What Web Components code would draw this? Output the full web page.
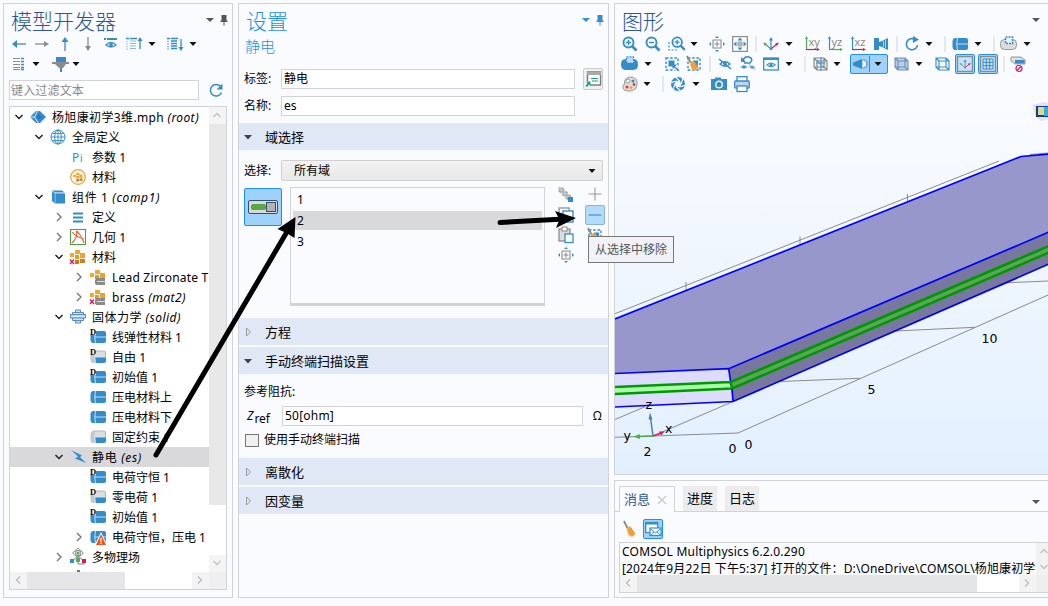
<!DOCTYPE html>
<html lang="zh-CN"><head><meta charset="utf-8"><title>COMSOL Multiphysics</title>
<style>
html,body{margin:0;width:1048px;height:606px;overflow:hidden;background:#fafbff}
body{font:12px/20px "Noto Sans","Noto Sans CJK SC",sans-serif;color:#000}
</style></head><body><app-shell></app-shell>
<script>
const B='#358ccb',G='#8c8c8c',O='#f0a030';
const L=(d,c=B,w=1.3,x='')=>`<path d="${d}" fill="none" stroke="${c}" stroke-width="${w}" ${x}/>`;
const F=(d,c=B)=>`<path d="${d}" fill="${c}"/>`;
const R=(x,y,w,h,f=B,s='none',k=1)=>`<rect x="${x}" y="${y}" width="${w}" height="${h}" fill="${f}" stroke="${s}" stroke-width="${k}"/>`;
const broom=L('M1 0L5 7','#888',2)+F('M4 7L8 5L14 13L10 16L6 14Z','#f5a742')+L('M6 9L11 14M8 7L12 12','#d9822b',.8);
const eye=L('M3 8Q8 3.500 13 8Q8 12.500 3 8Z',B,1.3)+`<circle cx="8" cy="8" r="1.900" fill="${B}"/>`;
const cyl=(top=B,d=false)=>F('M5 2H14Q16 2 16 4V8H5Z',top)+F('M5 8H16V12Q16 14 14 14H5Z')+`<path d="M3 2H5.500Q4 8 5.500 14H3Q0 14 .5 8Q0 2 3 2Z" fill="${top==B?B:'#c4c8cc'}"/>`+L('M5.500 2Q4 8 5.500 14M5 8H16','#cfe6f6',.9)+(top!=B?L('M3 2H14Q15.500 2 15.500 4V8','#aaa',.8):'')+(d?R(0,-1,6,7,'#fff')+`<text x="0" y="5.500" font-family="Liberation Serif" font-weight="bold" font-size="8.500">D</text>`:'');
const mat=(s='')=>R(0,4,4,4,'#f5a928')+R(5,1,5,4,'#f5a928')+R(5,6,4,4,'#e69a22')+R(10,4,5,5,'#f0a030')+R(5,11,4,4,'#c87820')+R(10,10,5,4,'#d08020')+s;
const db=F('M6 9H15V16H6Q4 12.500 6 9','#8a8a8a')+L('M7 12.500H15','#ddd',1);
const red=R(-.5,9,5,6.500,'#fff')+L('M0 10.500L4 15M4 10.500L0 15','#d81b60',1.4);
const cube=(c,f)=>F('M2 2H11L15 5V14H5L2 11Z',f)+L('M2 2H12V11H2ZM5 5H15V14H5ZM2 2L5 5M12 2L15 5M2 11L5 14M12 11L15 14',c,1.1);
const plane=(t,h,v)=>L('M2.500 2V14',v,1.2)+L('M2 13.500H14',h,1.2)+F('M2.500 0L1 3H4Z',v)+F('M16 13.500L13 12V15Z',h)+`<text x="4.500" y="10" font-size="11" font-family="Noto Sans" fill="#8a8a8a">${t}</text>`;
const lens=(s)=>`<circle cx="6.500" cy="6.500" r="5" fill="none" stroke="${B}" stroke-width="1.900"/>`+L('M10 10L14.500 14.500',B,2.600)+L(s,B,1.400);
const ext=L('M4 4H12V12H4ZM8 5.500V10.500M5.500 8H10.500',G,1.100)+F('M8 0L10 2H6ZM8 16L10 14H6ZM0 8L2 6V10ZM16 8L14 6V10Z');
const dsel=L('M2 2H14V14H2Z',B,1.400,'stroke-dasharray="2.500 1.700"');
const axes=L('M8 3V13',B,1.2)+L('M8 13L2 8','#4caf50',1.2)+L('M8 13L14 8','#d81b60',1.2)+F('M8 1L10 4.500H6Z')+F('M0 6.500L4 7.500L2 10Z','#4caf50')+F('M16 6.500L12 7.500L14 10Z','#d81b60')+`<circle cx="8" cy="13" r="1.300" fill="${B}"/>`;
const cap=(f,s)=>`<rect x="-.5" y="3.500" width="16" height="10" rx="4" fill="${f}" stroke="${s}"/>`;
const I={none:'',
left:L('M2 8H15')+F('M1 8L6 4V12Z'),right:L('M1 8H13',G)+F('M15 8L10 5V11Z',G),up:L('M8 3V15')+F('M8 1L11.500 6H4.500Z'),down:L('M8 1V13',G)+F('M8 15L11 10H5Z',G),
eyebar:R(1,2,2,2)+R(4,2,10,2)+L('M3 9Q8 4 13 9Q8 13 3 9Z')+`<circle cx="8" cy="9" r="1.900" fill="${B}"/>`,
lup:L('M0 2.500H3M4 2.500H11',B,1.500)+L('M4 5H10M4 7.500H10M4 10H10M4 12.500H10','#8db9dc',1.200)+L('M1 5V14','#8db9dc',1.200,'stroke-dasharray="1.200 1.300"')+L('M14 3V13')+F('M14 1L16.500 5H11.500Z'),
ldn:L('M0 2.500H3M4 2.500H11',B,1.500)+L('M4 5H10M4 7.500H10M4 10H10M4 12.500H10')+L('M1 5V14',B,1.200,'stroke-dasharray="1.200 1.300"')+L('M14 3V13')+F('M14 15L16.500 11H11.500Z'),
cols:L('M4 2.500H11M4 5.500H11M4 8.500H11M4 11.500H11M4 13.500H11',G,1.100)+L('M12 2.500H15M12 5.500H15M12 8.500H15M12 11.500H15M12 13.500H15',B,1.500),
filter:R(3,1,10,5)+F('M-1 6H16V8H13L10 12H6L2 8H-1Z',G)+R(7,12,2,4),
drop:F('M4.500 6H11.500L8 10Z','#111'),dgray:F('M4 6H12L8 10Z','#555'),dblue:F('M4 6H12L8 10Z'),
pin:R(5.500,3,5,6,'#555')+R(4.500,8.500,7,1.500,'#555')+R(7.500,10,1,3.500,'#555'),pinb:R(5.500,3,5,6)+R(4.500,8.500,7,1.500)+R(7.500,10,1,3.500),
sep:L('M8 0V16','#d4d5d8',1),
refresh:L('M12.500 4.300A5.800 5.800 0 1 0 13.500 10.500',B,1.500)+F('M14.500 1.500V7.500H8.500Z'),
root:F('M0 8L6 2H10L16 8L10 14H6Z')+L('M8 1L4.500 8L9 15M0 8H5',`#d9ecfa`,1)+F('M9 5L12 8L9 11L6.500 8Z','#2a78b5'),
globe:`<circle cx="8" cy="8" r="7" fill="none" stroke="${B}"/><ellipse cx="8" cy="8" rx="3.300" ry="7" fill="none" stroke="${B}"/>`+L('M8 1V15M1 8H15M2 4.500H14M2 11.500H14',B,.9),
pi:`<text x="2" y="12.500" font-size="12" font-family="Noto Sans" fill="${B}">P</text><text x="10" y="13" font-size="10" font-family="Noto Sans" fill="${B}">i</text>`,
matg:`<circle cx="8" cy="8" r="7.300" fill="#fff8ee" stroke="${O}" stroke-width="1.200"/><g transform="translate(3.200 3.200) scale(.62)">${mat()}</g>`,
comp:F('M2 2L5 4V14.500L2 12Z')+F('M2 1.500H12L14.500 3.500H5Z')+R(5,4,10,10.500)+L('M2.500 2L5 4.300H15M5.200 4V14','#b4d8f2',.7),
def:L('M3 4.500H13M3 8.500H13M3 12.500H13',B,2),
geom:R(.5,.5,15,15,'#fff','#4aa14a',1.100)+L('M2 14Q7 9 7 3Q10 4 14 14M2 3Q6 8 14 10','#e8623c',1.200)+`<circle cx="7" cy="3" r="1.300" fill="#e8623c"/>`,
mats:mat(red),matd:mat(db),matx:mat(db+red),
solid:L('M5.500 1H10.500V3.500H5.500ZM2.500 3.500H13.500V11.500H2.500ZM5.500 11.500H10.500V14H5.500Z','#5a8cb8',1,'style="fill:#cfe0ef"')+L('M.5 5.500H15.500V9H.5Z','#5a8cb8',1,'style="fill:#b5cee4"')+L('M1 7.300H15','#e8f2fa',1),
cylD:cyl(B,1),cylGD:cyl('#dedede',1),cyl:cyl(),cylG:cyl('#dedede'),
bolt:F('M1 1L12 6.500L10 8L16 14L5 9.500L8 7.500Z'),
cylW:cyl()+F('M11 3L17.500 16.500H4.500Z','#fff')+F('M11 5L16 16H6Z','#f2561d')+L('M11 9V12.500M11 13.500V15','#fff',1.300),
multi:L('M8 6L3 12M8 6V12M8 6L13 12M8 12V15H14V12','#777',.9)+R(0,10,4,4,B)+R(6,9,4,4,'#4caf50')+R(12,10,4,4,'#d81b60')+`<ellipse cx="8" cy="4" rx="5" ry="2.300" fill="none" stroke="#888"/><ellipse cx="8" cy="4" rx="2.300" ry="4.500" fill="none" stroke="#888"/><circle cx="8" cy="4" r="1.500" fill="#4caf50"/>`,
open:L('M4.500 6L8 9.500L11.500 6','#222',1.500),shut:L('M6 4L10 8L6 12','#777',1.400),
zin:lens('M4 6.500H9M6.500 4V9'),zout:lens('M4 6.500H9'),
zbox:L('M1 6V14H9',B,1.200,'stroke-dasharray="2 1.500"')+`<g transform="translate(3 0) scale(.95)">${lens('M4 6.500H9M6.500 4V9')}</g>`,
ext,extb:R(.6,.6,14.800,14.800,'none',G,1.200)+L('M6 6H10V10H6ZM8 6V10M6 8H10',G,.8)+F('M8 1.500L10.500 4.500H5.500ZM8 14.500L10.500 11.500H5.500ZM1.500 8L4.500 5.500V10.500ZM14.500 8L11.500 5.500V10.500Z'),
axes,xy:plane('xy','#d81b60','#4caf50'),yz:plane('yz','#4caf50',B),xz:plane('xz','#d81b60',B),
cam:F('M1 2H6V14H1ZM6 6L9 5V11L6 10ZM9 5L15 2V14L9 11Z')+L('M10.500 5V11M12.500 4V12','#cfe6f6',.8),
rot:L('M11 3.500A5.600 5.600 0 1 0 13.500 9',B,1.600)+F('M9 0L15 3.500L9 7Z'),
capg:cap('#dcdcdc','#999')+R(4.500,1.500,7,6,'#e8f1f8')+L('M4.500 1H11.500V7.500H4.500Z',B,1.500,'stroke-dasharray="2 1"'),
capb:cap('#358ccb',B)+R(4,2,8,5,'#b8daf3')+L('M4.500 1H11.500V7.500H4.500Z',B,1.300,'stroke-dasharray="2 1"'),
sel:dsel+R(4.500,4.500,6,6)+L('M15 15L9 9','#fafbff',4)+F('M7 7L13 9L11 10.500L15.500 14L14 15.500L10.500 11.500L9 13Z'),selb:dsel+F('M7 4.500H12V11Z')+`<g transform="translate(0 0) scale(.92)">${broom}</g>`,
hide:eye+L('M2 3L14 13',B,1.500),reset:L('M4 7H10Q14 3 9 1Q5 0 3 4',B,1.600)+F('M1 1V6H6Z')+`<g transform="translate(-1 6) scale(.62)">${eye}</g><g transform="translate(8 7) scale(.52)">${eye+L('M2 3L14 13')}</g>`,
win:R(.7,2,14.600,12,'none',B,1.300)+R(1,2,14,2)+`<g transform="translate(1.500 2.300) scale(.82)">${eye}</g>`,
cubeg:cube('#888','#eee')+L('M9 1V15M4 7H13M5 4L12 12',B,1),
lamp:F('M1 6.500L10 3V13L1 9.500Z')+L('M11 4A4 4 0 0 1 11 12',B,1.200,'style="fill:#fff"'),
cubes:cube('#6c8fb4','#b9cfe8'),cubew:cube(B,'none'),
axb:R(.6,.6,14.800,14.800,'#c9e4fa',G,1.300)+`<g transform="translate(2.500 2.500) scale(.7)">${axes}</g>`,
grid:R(.6,.6,14.800,14.800,'#c9e4fa',G,1.300)+L('M3 3H13V13H3ZM6.300 3V13M9.700 3V13M3 6.300H13M3 9.700H13',B,1),
no:L('M1 1H11L15 4V8H5L1 5Z','#999',1,'style="fill:#ddd"')+R(5,4,9.500,3.500)+`<circle cx="9" cy="12.500" r="3" fill="#fff" stroke="#d81b60" stroke-width="1.200"/>`+L('M7 14.500L11 10.500','#d81b60'),
pal:`<path d="M8 1Q16 1 15 8Q15 15 7 15Q0 15 1 10Q3 8 2.500 6Q3 2 8 1Z" fill="#ddd" stroke="#999"/><circle cx="6" cy="5" r="2" fill="#fff" stroke="#999"/><circle cx="11" cy="5" r="1.500" fill="${B}"/><circle cx="5" cy="11" r="1.500" fill="#e33"/><circle cx="9" cy="11.500" r="1.500" fill="#f5a928"/><circle cx="12" cy="8.500" r="1.300" fill="#d81b60"/>`,
apt:`<circle cx="8" cy="8" r="5" fill="none" stroke="${B}" stroke-width="4"/>`+[0,60,120,180,240,300].map(a=>`<path transform="rotate(${a} 8 8)" d="M5 .5L10 5.500" stroke="#fafbff" stroke-width="1.100"/>`).join(''),
photo:F('M0 3H4V1.500H10V3H16V14H0Z')+`<circle cx="8" cy="8.500" r="3.300" fill="${B}" stroke="#fff" stroke-width="1.400"/>`,
print:R(3,.7,10,5,'#fff',B,1.300)+`<rect x=".7" y="5" width="14.600" height="7" rx="1" fill="#bcd3ec" stroke="${B}" stroke-width="1.300"/>`+R(3,10,10,5.500,'#fff',B,1.300),
broom:`<g transform="translate(2 0) scale(.9 1)">${broom}</g>`,mail:R(.7,1.500,12,10,'#fff',B,1.300)+R(1,1.500,12,2)+R(5,7,11,7.500,'#fff',B,1.200)+L('M5 7.500L10.500 12L16 7.500M5 14.500L9 11M16 14.500L12 11',B,1),
goto:R(2.500,1,13,13,'#fff','#777',1.400)+R(2,1,14,3,'#aaa')+L('M6 7.500H13M7 10H13','#1f9d87',1.200)+R(0,10,5,6,'#f0f0f0')+F('M1 10.500H5.500V15L4 13.500L2 16L.5 15L2.500 12Z','#1f9d87'),
chain:['0 0','3.500 3.500','7 7'].map(t=>`<g transform="translate(${t}) scale(.4)">${cube('#888','#ddd')}</g>`).join('')+R(10,10,5,5,B),
copy:R(1,1,10,10,'#fff','#888',1.200)+R(5,4,10,11,'#fff',B,1.400),paste:R(1,2,11,12,'#ddd','#888',1.200)+R(4,0,5,4,'#fff','#888')+R(7,7,8,8.500,'#fff',B,1.300),
plus:L('M1.500 8H14.500M8 1.500V14.500','#999',1.100),minus:L('M1.500 8H14.500',B,1.100),
toggle:`<rect x="-6.500" y="1.500" width="29" height="13" rx="1.500" fill="#d9d9d9" stroke="#34506f"/>`+`<rect x="-4" y="5" width="15" height="6" rx="2" fill="#57a845"/>`+R(11.500,3.500,9,9,'#b3b3b3','#34506f'),
tri:F('M4 6H12L8 10.500Z','#444'),tris:L('M6.500 4V12L10.500 8Z','#999',1),
au:L('M4.500 10L8 6.500L11.500 10','#c0c1c4',1.300),ad:L('M4.500 6L8 9.500L11.500 6','#c0c1c4',1.300),al:L('M10 4.500L6.500 8L10 11.500','#bbb',1.300),ar:L('M6 4.500L9.500 8L6 11.500','#bbb',1.300),
x:L('M4 4L12 12M12 4L4 12','#c3c9d2',1.200)
};
const def=(tag,css,html)=>customElements.define(tag,class extends HTMLElement{
 connectedCallback(){if(this.shadowRoot)return;const s=this.attachShadow({mode:'open'});
 s.innerHTML=`<style>:host{display:block;box-sizing:border-box}*{box-sizing:border-box}${css}</style>`+(typeof html=='function'?html(this):html)}});
def('ui-icon',':host{width:16px;height:16px;flex:none}svg{display:block;overflow:visible}',e=>`<svg width="16" height="16" viewBox="0 0 16 16">${I[e.getAttribute('name')]}</svg>`);
// A label that spreads its letters to a given width.
customElements.define('fit-text',class extends HTMLElement{connectedCallback(){
 const s=this.attachShadow({mode:'open'});s.innerHTML='<style>:host{display:inline-block;white-space:pre;flex:none}</style><slot></slot>';
 const w=+this.getAttribute('w');if(w){const n=this.textContent.length;this.style.letterSpacing=(w-this.getBoundingClientRect().width)/n+'px'}}});
// items="icon:centre,..." in window x; start gives the strip's left edge.
def('tool-strip',`:host{display:flex;height:20px;align-items:center}
.b{height:20px;display:flex;align-items:center;flex:none;justify-content:center;background:#9fd2fa;border:1px solid #1e90ee;border-radius:2px}.b.w{justify-content:space-between;padding:0 1px}.b i{width:1px;height:16px;flex:none;background:#1e90ee}`,e=>{
 let c=+e.getAttribute('start');return e.getAttribute('items').split(',').map(t=>{const[n,x]=t.split(':');
 const btn=n[0]=='*',wide=n=='*lamp',w=wide?38:btn?20:16,m=+x-w/2-c;c=+x+w/2;const st=`style="margin-left:${m}px${btn?`;width:${w}px`:''}"`;
 return wide?`<div class="b w" ${st}><ui-icon name="lamp"></ui-icon><i></i><ui-icon name="drop"></ui-icon></div>`:
 btn?`<div class="b" ${st}><ui-icon name="${n.slice(1)}"></ui-icon></div>`:`<ui-icon name="${n}" ${st}></ui-icon>`}).join('')});
def('panel-title',`:host{display:flex;height:30px;font-size:21px;line-height:34px;font-weight:300;padding-left:7px;color:var(--c)}span{flex:1}::slotted(ui-icon){margin-top:8px}`,
 e=>`<span><fit-text w="${e.getAttribute('w')}">${e.getAttribute('text')}</fit-text></span><slot></slot>`);
def('tree-row',`:host{display:flex;height:20px;align-items:center}fit-text{margin:2px 0 0 6px}:host([on]){background:#d9d9dc}`,
 e=>`<ui-icon name="${e.getAttribute('arrow')||'none'}" style="margin-left:${e.getAttribute('ind')}px"></ui-icon><ui-icon name="${e.getAttribute('icon')}" style="margin-left:3px"></ui-icon><fit-text><slot></slot></fit-text>`);
const rows=[['open',0,'root','杨旭康初学3维.mph','(root)',147],['open',1,'globe','全局定义','',48],['',2,'pi','参数 1','',34],['',2,'matg','材料','',24],['open',1,'comp','组件 1','(comp1)',88],['shut',2,'def','定义','',24],['shut',2,'geom','几何 1','',34],['open',2,'mats','材料','',24],['shut',3,'matd','Lead Zirconate T','',96.5],['shut',3,'matx','brass','(mat2)',74],['open',2,'solid','固体力学','(solid)',89],['',3,'cylD','线弹性材料 1','',70],['',3,'cylGD','自由 1','',34],['',3,'cylD','初始值 1','',46],['',3,'cyl','压电材料上','',60],['',3,'cyl','压电材料下','',60],['',3,'cylG','固定约束 1','',58],['open',2,'bolt','静电','(es)',50],['',3,'cylD','电荷守恒 1','',58],['',3,'cylGD','零电荷 1','',46],['',3,'cylD','初始值 1','',46],['shut',3,'cylW','电荷守恒，压电 1','',94],['shut',2,'multi','多物理场','',48]];
customElements.define('model-tree',class extends HTMLElement{connectedCallback(){const s=this.attachShadow({mode:'open'});
 s.innerHTML=`<style>:host{display:grid;grid-template:465px 17px/199px 17px;border:1px solid #d2d3d7;background:#fff;width:218px;height:484px;margin-left:5px;box-sizing:border-box}
 .t{overflow:hidden;background:#fff}.v{background:#fff;display:flex;flex-direction:column;justify-content:space-between}.v i{flex:none;height:381px;background:#e8e8e8;margin-bottom:auto}.h{display:flex;background:#fff}.h ui-icon{background:#f3f3f4;width:17px;height:17px}.h i{width:98px;background:#e6e6e7;margin-right:auto}.c{background:#efefef}.v ui-icon{background:#f4f4f4;width:17px;height:17px}em{font-style:italic}</style>
 <div class="t">${rows.map((r,i)=>`<tree-row ${i==17?'on':''} arrow="${r[0]}" ind="${1+r[1]*20}" icon="${r[2]}"></tree-row>`).join('')}<div style="width:3px;height:2px;background:#777;margin:3px 0 0 67px"></div></div><div class="v"><ui-icon name="au"></ui-icon><i></i><ui-icon name="ad"></ui-icon></div><div class="h"><ui-icon name="al"></ui-icon><i></i><ui-icon name="ar"></ui-icon></div><div class="c"></div>`;
 s.querySelectorAll('tree-row').forEach((e,i)=>{const r=rows[i];e.innerHTML=`<span>${r[3]}</span>${r[4]?` <em>${r[4]}</em>`:''}`;
 const f=e.shadowRoot.querySelector('fit-text'),n=e.textContent.length;f.style.letterSpacing='0px';f.style.letterSpacing=(r[5]-f.getBoundingClientRect().width)/n+'px'})}});
def('model-panel',`:host{width:230px;border:1px solid #d2d3d7;flex:none}.f{display:flex;margin:6px 0 6px 5px;align-items:center}.i{width:190px;height:20px;border:1px solid #d2d3d7;background:#fff;color:#8a8a8a;padding-left:1px;line-height:19px}.f ui-icon{margin-left:9px}`,
 `<panel-title text="模型开发器" w="105" style="--c:#2b579a"><ui-icon name="dgray" style="margin-right:-2px"></ui-icon><ui-icon name="pin"></ui-icon></panel-title>
 <tool-strip start="4" items="left:19,right:42,up:64.5,down:87.5,eyebar:111,lup:134,drop:151.5,ldn:175,drop:192.5"></tool-strip>
 <tool-strip start="4" items="cols:17,drop:35.500,filter:60.5,drop:75.500"></tool-strip>
 <div class="f"><div class="i"><fit-text w="73">键入过滤文本</fit-text></div><ui-icon name="refresh"></ui-icon></div><model-tree></model-tree>`);
def('section-head',`:host{display:flex;height:27px;background:#dfe8f4;align-items:center;font-size:13px;flex:none}fit-text{margin-left:9px}`,e=>`<ui-icon name="${e.hasAttribute('open')?'tri':'tris'}" style="margin-left:1px"></ui-icon><fit-text w="${e.getAttribute('w')}">${e.textContent}</fit-text>`);
def('form-field',`:host{display:flex;height:20px;margin:0 0 7px 5px;align-items:center}.l{width:var(--l,37px);flex:none;font-size:12px;white-space:nowrap}.i{border:1px solid #d2d3d7;background:#fff;height:20px;line-height:18px;width:var(--w,294px);padding-left:2px;flex:none}`,
 `<div class="l"><slot name="label"></slot></div><div class="i"><slot></slot></div><slot name="end"></slot>`);
def('domain-picker',`:host{display:flex;height:119px;margin-left:5px}.tg{width:38px;height:38px;background:#9fd2fa;border:1px solid #1e90ee;border-radius:2px;display:flex;align-items:center;justify-content:center;margin:1px 8px 0 0}
.l{width:255px;height:119px;border:1px solid #d2d3d7;border-bottom-width:3px;padding:2px;font-size:12px}.l div{height:19px;margin-bottom:2px;line-height:20px;padding-left:4px}.l .s{background:#d9d9da}.c{display:flex;flex-direction:column;gap:4px;margin-left:13px;width:16px}.d{width:20px;margin:-1px 0 0 11px;display:flex;flex-direction:column;align-items:center}.m{width:20px;height:20px;border:1px solid #86b4dc;border-radius:2px;background:#b5dbf8;display:flex;align-items:center;justify-content:center;margin:3px 0}`,
 `<div class="tg"><ui-icon name="toggle"></ui-icon></div><div class="l"><div>1</div><div class="s">2</div><div>3</div></div><div class="c"><ui-icon name="chain"></ui-icon><ui-icon name="copy"></ui-icon><ui-icon name="paste"></ui-icon><ui-icon name="ext"></ui-icon></div><div class="d"><ui-icon name="plus"></ui-icon><div class="m"><ui-icon name="minus"></ui-icon></div><ui-icon name="selb"></ui-icon></div>`);
def('settings-panel',`:host{width:371px;border:1px solid #d2d3d7;flex:none;display:flex;flex-direction:column}
.sub{font-size:15px;color:#1e8fee;height:35px;line-height:25px;padding-left:6px;font-weight:300}.go{width:20px;height:22px;border:1px solid #ccc;border-radius:2px;background:#f0f0f0;display:flex;align-items:center;justify-content:center;margin-left:8px}
.s{display:flex;margin:10px 0 6px 5px;height:21px;align-items:center}.s span{width:37px}.dd{width:322px;height:21px;border:1px solid #cfcfd2;border-radius:2px;background:linear-gradient(#f2f2f2,#e8e8e8);display:flex;align-items:center;justify-content:space-between;padding:0 2px 0 12px}
.r{height:32px;padding:8px 0 0 5px}.ck{display:flex;align-items:center;height:14px;margin:0 0 11px 6px;gap:5px}.ck i{width:14px;height:13px;border:1px solid #777;background:#f0f0f0}`,
 `<panel-title text="设置" w="42" style="--c:#1e8fee"><ui-icon name="dblue" style="margin-right:-2px"></ui-icon><ui-icon name="pinb"></ui-icon></panel-title><div class="sub">静电</div>
 <form-field><span slot="label">标签:</span>静电<span slot="end" class="go"><ui-icon name="goto"></ui-icon></span></form-field>
 <form-field><span slot="label">名称:</span>es</form-field>
 <section-head open w="39">域选择</section-head>
 <div class="s"><span>选择:</span><div class="dd"><span>所有域</span><ui-icon name="drop"></ui-icon></div></div><domain-picker></domain-picker>
 <section-head w="26" style="margin-top:12px">方程</section-head><section-head open w="104" style="margin-top:2px">手动终端扫描设置</section-head>
 <div class="r">参考阻抗:</div><form-field style="--w:301px;--l:38px"><span slot="label" style="padding-left:3px"><i>Z</i><span style="font-size:12px;position:relative;top:3px;margin-left:1px">ref</span></span><fit-text w="49">50[ohm]</fit-text><span slot="end" style="margin-left:10px">Ω</span></form-field>
 <div class="ck"><i></i><fit-text w="96">使用手动终端扫描</fit-text></div>
 <section-head w="39">离散化</section-head><section-head w="39" style="margin-top:2px">因变量</section-head>`);
def('graphics-view',`:host{height:379px}svg{display:block}text{font:12.500px "DejaVu Sans"}`,()=>{
 const g=(d)=>L(d,'#8b8b8b',1),b=d=>L(d,'#0000ff',1.700),gr=d=>L(d,'#009900',2.600),t=(x,y,s)=>`<text x="${x}" y="${y}">${s}</text>`;
 return `<svg width="433" height="379" viewBox="615 95 433 379"><defs><linearGradient id="bg" x2="0" y2="1"><stop stop-color="#fafbff"/><stop offset="1" stop-color="#e2f0fe"/></linearGradient></defs>${R(615,95,433,379,'url(#bg)')}
 ${g('M615 313.700L999 161M686 282V290M800 236.500V244.500M907.500 194V202M1030 154.500L1048 153M738 433L975 327.500L1048 295M860 378.300L780 381.500M975 327.300L895 331M1000 283L1048 281M615 437.300L738 433M733 401.500L653 436M615 419.500L645 406.700')}
 ${F('M615 319L1021 156.500L1049 154V232.300L728.700 368.700L615 373.500Z','#9797cb')}${F('M615 373.500L728.700 368.700L733 401.500L615 407Z','#dddcff')}${F('M728.700 368.700L1049 232V264L733 401.500Z','#77779f')}
 ${F('M615 387L731 382L732 388.500L615 394Z','#aaffaa')}${F('M731 382L1049 246V253L732 388.500Z','#5ba55b')}
 ${gr('M615 387L731 382L1049 246M615 394L732 388.500L1049 252.500M730.500 382L732 388')}
 ${b('M615 319L1021 156.500L1049 154M615 373.500L728.700 368.700L1049 232M615 407L733 401.500L1049 264M728.700 368.700L730.500 381M732 389L733 401.500')}
 ${L('M653 436L650.500 418','#4a80b8',1.500)+F('M650 412.500L652.500 419.500H648.500Z','#4a80b8')+L('M653 436L638 436.500','#55aa44',1.500)+F('M633 436.600L640 434.300V439Z','#55aa44')+L('M653 436L660 433.500','#d81b60',1.500)+F('M664.500 431.500L661 435.500L659 431.500Z','#d81b60')}
 ${t(645.500,409,'z')+t(623.500,440,'y')+t(665,433,'x')+t(643.500,456,'2')+t(728.500,453,'0')+t(744.500,449,'0')+t(867.500,394,'5')+t(981.500,343,'10')}
 ${F('M1032 105L1044 102L1050 104V119L1041 121L1036 117Z','#e3e3e3')+R(1036,106,14,11,'#173d91')+R(1038,107,7,8,'#d8dc8c')+R(1044,107,4,9,'#43a7d8')}</svg>`});
def('graphics-panel',`:host{height:472px;border:1px solid #d2d3d7;border-right:0;overflow:hidden}`,
 `<panel-title text="图形" w="42" style="--c:#2b579a"><ui-icon name="dgray" style="margin-right:4px"></ui-icon></panel-title>
 <tool-strip start="615" items="zin:630,zout:653,zbox:676,drop:693.5,ext:716.5,extb:739.5,sep:755.5,axes:771,drop:788.5,xy:812,yz:835,xz:858,cam:881,sep:896.5,rot:912,drop:928.5,sep:944.5,cyl:960,drop:977.5,sep:993.5,capg:1009,drop:1026.5"></tool-strip>
 <tool-strip start="615" items="capb:630,drop:647.5,sel:671.5,selb:694,sep:709.5,hide:725,reset:748,win:771,drop:788.5,sep:804.5,cubeg:819.5,drop:836.5,*lamp:869,cubes:901,drop:918.5,cubew:942,*axb:965,*grid:988,sep:1003.5,no:1018"></tool-strip>
 <tool-strip start="615" items="pal:630,drop:646.5,sep:662.5,apt:678,drop:695.5,photo:719,print:742"></tool-strip><graphics-view style="margin-top:1px"></graphics-view>`);
def('message-panel',`:host{height:118px;border:1px solid #d2d3d7;border-right:0;margin-top:5px;overflow:hidden}
.t{display:flex;height:31px;padding-top:5px;font-size:13px;line-height:25px;background:linear-gradient(#d2d3d7,#d2d3d7) 0 100%/100% 1px no-repeat}.a{width:56px;height:26px;border:1px solid #d2d3d7;border-bottom:0;background:#fafbff;margin:0 8px 0 4px;display:flex;align-items:center;justify-content:space-between;padding:0 4px;color:#2b579a}.k{width:34px;height:25px;background:#ececec;margin-right:8px;padding-left:4px}
.o{margin:3px 0 0 4px;border:1px solid #d2d3d7;border-right:0;height:51px;background:#fafbff;display:grid;grid-template:32px 17px/416px 13px;width:430px}.m{margin-bottom:-4px;padding-left:2px;white-space:nowrap;line-height:17px}.m fit-text{display:block;width:max-content}.v{background:#f2f2f2;overflow:hidden;display:flex;flex-direction:column}.h{display:flex;background:#fff}.h ui-icon{width:17px;background:#f3f3f4;height:17px}.h i{width:340px;background:#e4e5e7;margin-right:auto}.c{background:#eee}`,
 `<div class="t"><div class="a"><fit-text w="26">消息</fit-text><ui-icon name="x"></ui-icon></div><div class="k">进度</div><div class="k">日志</div><ui-icon name="dgray" style="margin:8px 4px 0 auto"></ui-icon></div>
 <tool-strip start="615" items="broom:629,*mail:653" style="margin-top:7px"></tool-strip>
 <div class="o"><div class="m"><fit-text w="183">COMSOL Multiphysics 6.2.0.290</fit-text><fit-text w="413.5">[2024年9月22日 下午5:37] 打开的文件：D:\\OneDrive\\COMSOL\\杨旭康初学</fit-text></div><div class="v"><ui-icon name="au"></ui-icon><ui-icon name="ad"></ui-icon></div><div class="h"><ui-icon name="al"></ui-icon><i></i><ui-icon name="ar"></ui-icon></div><div class="c"></div></div>`);
def('tool-tip',`:host{position:absolute;left:588px;top:236px;width:86px;height:27px;border:1px solid #777;background:#f1f2f7;color:#555;padding-left:6px;line-height:25px}`,`<slot></slot>`);
def('pointer-arrows',`:host{position:absolute;left:0;top:0;width:1048px;height:606px;pointer-events:none}`,
 `<svg width="1048" height="606">${L('M156 455L288 230','#000',5,'stroke-linecap="round"')+F('M295.500 217L294.500 238L286.500 233L277.500 229Z','#000')+L('M500 222.500L564 219','#000',5,'stroke-linecap="round"')+F('M576 218L556 228L559.500 219.500L555 211Z','#000')}</svg>`);
def('app-shell',`:host{width:1048px;height:606px;overflow:hidden;position:relative}.g{display:flex;gap:5px;padding:3px 0 0 3px;height:598px}.r{width:434px;flex:none}`,
 `<div class="g"><model-panel></model-panel><settings-panel></settings-panel><div class="r"><graphics-panel></graphics-panel><message-panel></message-panel></div></div><tool-tip><fit-text w="72">从选择中移除</fit-text></tool-tip><pointer-arrows></pointer-arrows>`);
</script></body></html>
